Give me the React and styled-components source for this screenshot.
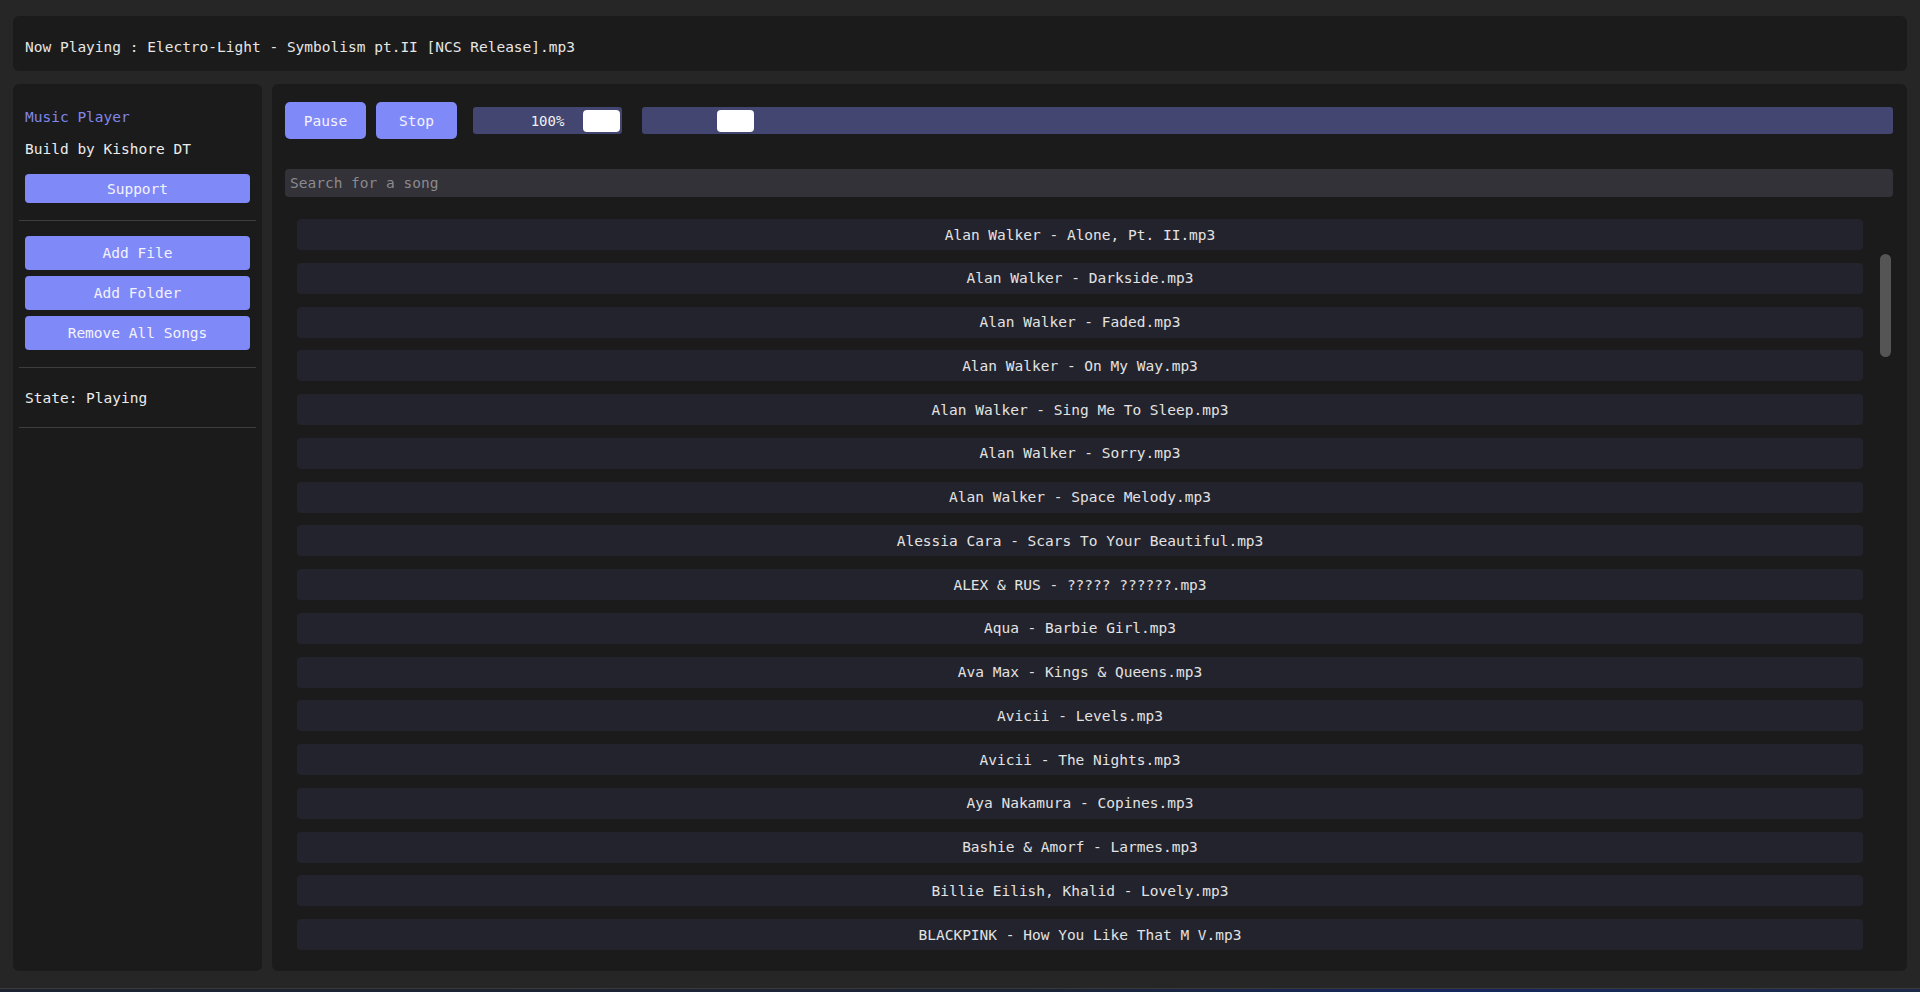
import React, { useState } from "react";
import styled, { createGlobalStyle } from "styled-components";

const GlobalStyle = createGlobalStyle`
  html, body {
    margin: 0;
    padding: 0;
    background: #262626;
  }
  * {
    box-sizing: border-box;
  }
`;

const mono = `"DejaVu Sans Mono", "Liberation Mono", monospace`;

const Page = styled.div`
  height: 100vh;
  display: flex;
  flex-direction: column;
  padding: 16px 13px 0;
  background: #262626;
  font-family: ${mono};
  font-size: 14.5px;
  color: #e4e4e4;
  overflow: hidden;
`;

const Header = styled.div`
  height: 55px;
  flex-shrink: 0;
  padding: 23px 12px 0;
  background: #1b1b1b;
  border-radius: 6px;
  line-height: 17px;
  color: #e6e6e6;
`;

const Body = styled.div`
  flex: 1;
  min-height: 0;
  display: flex;
  gap: 10px;
  margin: 13px 0 17px;
`;

const Panel = styled.div`
  background: #1b1b1b;
  border-radius: 6px;
`;

const Sidebar = styled(Panel)`
  width: 249px;
  flex-shrink: 0;
  padding: 24px 6px 0;
`;

const Section = styled.div`
  padding: 0 6px;
  display: flex;
  flex-direction: column;
`;

const Title = styled.div`
  line-height: 18px;
  color: #8087ea;
`;

const Line = styled.div`
  line-height: 18px;
  margin-top: ${(p) => p.$mt || 0}px;
  color: #ececec;
`;

const Button = styled.button`
  border: none;
  border-radius: 4px;
  background: #8089f8;
  color: #f3f3ff;
  font-family: ${mono};
  font-size: 14.5px;
  height: ${(p) => p.$h || 34}px;
  padding: 0 10px;
  cursor: pointer;
  flex-shrink: 0;
`;

const SideButton = styled(Button)`
  width: 100%;
  margin-top: ${(p) => p.$mt || 0}px;
`;

const Divider = styled.div`
  height: 1px;
  background: #3d3d3d;
  margin-top: ${(p) => p.$mt || 0}px;
`;

const Main = styled(Panel)`
  flex: 1;
  min-width: 0;
  display: flex;
  flex-direction: column;
  padding: 18px 14px 12px 13px;
`;

const Controls = styled.div`
  display: flex;
  align-items: center;
  height: 37px;
  gap: 10px;
`;

const CtrlButton = styled(Button)`
  width: 81px;
  height: 37px;
  border-radius: 5px;
`;

const Track = styled.div`
  position: relative;
  height: 27px;
  background: #434670;
  border-radius: 3px;
  margin-left: ${(p) => p.$ml || 0}px;
  width: ${(p) => (p.$w ? `${p.$w}px` : "auto")};
  flex: ${(p) => (p.$w ? "0 0 auto" : "1")};
  display: flex;
  align-items: center;
  justify-content: center;
  color: #f0f0f0;
  font-size: 14px;
`;

const Thumb = styled.div`
  position: absolute;
  top: 3px;
  width: 37px;
  height: 22px;
  background: #ffffff;
  border-radius: 4px;
`;

const Search = styled.input`
  margin-top: 30px;
  height: 28px;
  flex-shrink: 0;
  border: none;
  outline: none;
  border-radius: 4px;
  background: #333238;
  color: #e0e0e0;
  font-family: ${mono};
  font-size: 14.5px;
  padding: 0 5px;
  &::placeholder {
    color: #8a8a8e;
  }
`;

const List = styled.div`
  flex: 1;
  min-height: 0;
  margin-top: 10px;
  display: flex;
`;

const Rows = styled.div`
  flex: 1;
  min-width: 0;
  padding-top: 12px;
  overflow: hidden;
`;

const Rail = styled.div`
  width: 18px;
  flex-shrink: 0;
  padding: ${(p) => p.$offset}px 2px 0 5px;
`;

const RailThumb = styled.div`
  height: ${(p) => p.$size}px;
  background: #555555;
  border-radius: 6px;
`;

const Song = styled.div`
  height: 31px;
  margin: 0 12px 12.75px;
  background: #23232d;
  border-radius: 4px;
  display: flex;
  align-items: center;
  justify-content: center;
  color: #e2e2e2;
  white-space: nowrap;
`;

const Strip = styled.div`
  height: 4px;
  flex-shrink: 0;
  margin: 0 -13px;
  border-top: 1px solid #3a3a3a;
  background: linear-gradient(90deg, #1d2330 0%, #1b2437 55%, #14285e 75%, #1c2a48 100%);
`;

const songs = [
  "Alan Walker - Alone, Pt. II.mp3",
  "Alan Walker - Darkside.mp3",
  "Alan Walker - Faded.mp3",
  "Alan Walker - On My Way.mp3",
  "Alan Walker - Sing Me To Sleep.mp3",
  "Alan Walker - Sorry.mp3",
  "Alan Walker - Space Melody.mp3",
  "Alessia Cara - Scars To Your Beautiful.mp3",
  "ALEX & RUS - ????? ??????.mp3",
  "Aqua - Barbie Girl.mp3",
  "Ava Max - Kings & Queens.mp3",
  "Avicii - Levels.mp3",
  "Avicii - The Nights.mp3",
  "Aya Nakamura - Copines.mp3",
  "Bashie & Amorf - Larmes.mp3",
  "Billie Eilish, Khalid - Lovely.mp3",
  "BLACKPINK - How You Like That M V.mp3",
];

const App = () => {
  const [search, setSearch] = useState("");
  const volume = 1;
  const progress = 0.06;

  const shown = songs.filter((s) =>
    s.toLowerCase().includes(search.toLowerCase())
  );

  return (
    <>
      <GlobalStyle />
      <Page>
        <Header>
          Now Playing : Electro-Light - Symbolism pt.II [NCS Release].mp3
        </Header>
        <Body>
          <Sidebar>
            <Section>
              <Title>Music Player</Title>
              <Line $mt={14}>Build by Kishore DT</Line>
              <SideButton $h={29} $mt={16}>Support</SideButton>
            </Section>
            <Divider $mt={17} />
            <Section>
              <SideButton $mt={15}>Add File</SideButton>
              <SideButton $mt={6}>Add Folder</SideButton>
              <SideButton $mt={6}>Remove All Songs</SideButton>
            </Section>
            <Divider $mt={17} />
            <Section>
              <Line $mt={21}>State: Playing</Line>
            </Section>
            <Divider $mt={20} />
          </Sidebar>
          <Main>
            <Controls>
              <CtrlButton>Pause</CtrlButton>
              <CtrlButton>Stop</CtrlButton>
              <Track $w={149} $ml={6}>
                {Math.round(volume * 100)}%
                <Thumb style={{ left: `calc(2px + ${volume} * (100% - 41px))` }} />
              </Track>
              <Track $ml={10}>
                <Thumb style={{ left: `calc(2px + ${progress} * (100% - 41px))` }} />
              </Track>
            </Controls>
            <Search
              placeholder="Search for a song"
              value={search}
              onChange={(e) => setSearch(e.target.value)}
            />
            <List>
              <Rows>
                {shown.map((s) => (
                  <Song key={s}>{s}</Song>
                ))}
              </Rows>
              <Rail $offset={47}>
                <RailThumb $size={103} />
              </Rail>
            </List>
          </Main>
        </Body>
        <Strip />
      </Page>
    </>
  );
};

export default App;
